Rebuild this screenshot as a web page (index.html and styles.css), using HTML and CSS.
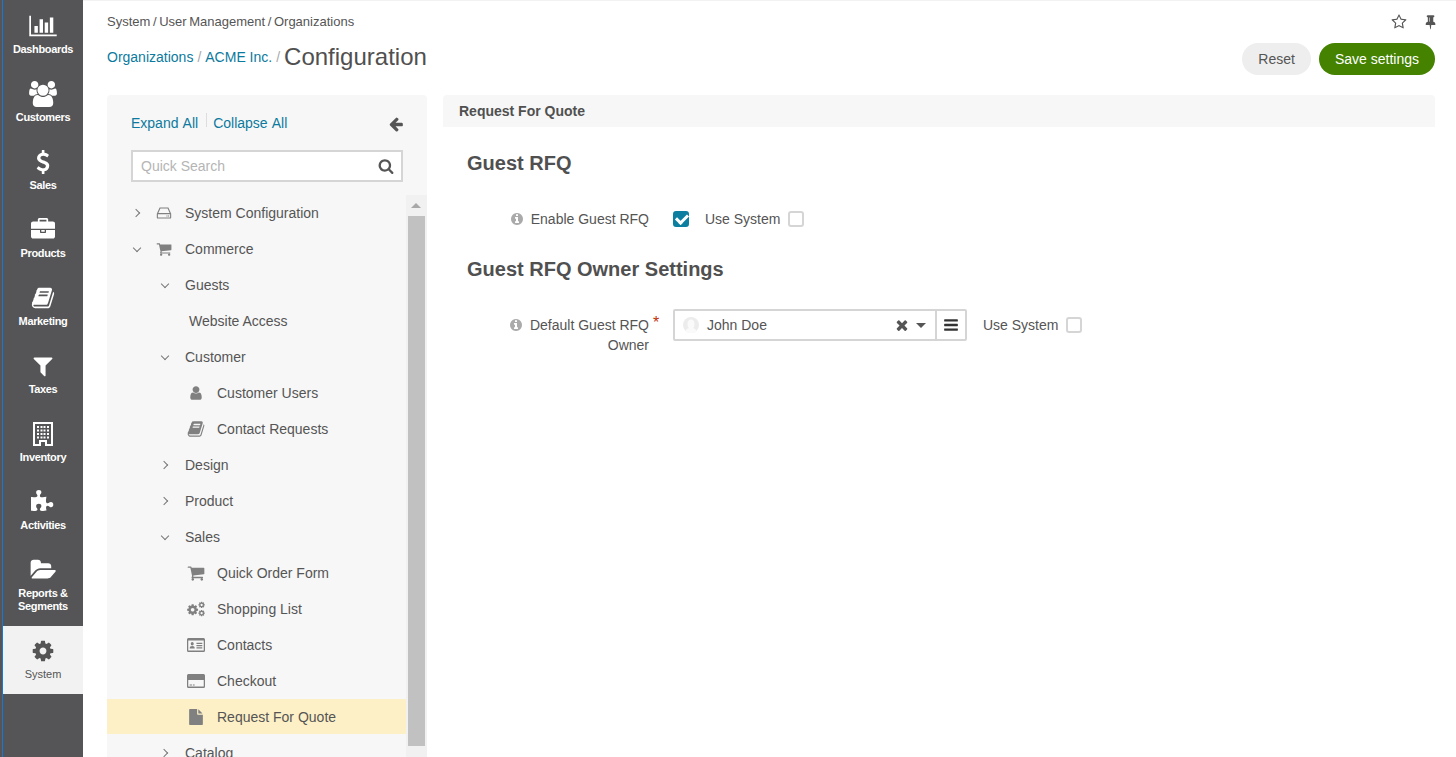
FILE: index.html
```html
<!DOCTYPE html>
<html lang="en">
<head>
    <meta charset="UTF-8">
    <meta name="viewport" content="width=device-width, initial-scale=1.0">
    <title>Configuration</title>
    <link rel="stylesheet" href="styles.css">
</head>
<body>
    <!-- icon sprite -->
    <svg class="sprite" xmlns="http://www.w3.org/2000/svg">
        <symbol id="i-chart" viewBox="0 0 2048 1792"><path d="M640 896v512h-256v-512h256zm384-512v1024h-256v-1024h256zm1024 1152v128h-2048v-1536h128v1408h1920zm-640-896v768h-256v-768h256zm384-384v1152h-256v-1152h256z"/></symbol>
        <symbol id="i-users" viewBox="0 0 1920 1792"><path d="M593 896q-162 5-265 128h-134q-82 0-138-40.5t-56-118.5q0-353 124-353 6 0 43.5 21t97.5 42.5 119 21.5q67 0 133-23-5 37-5 66 0 139 81 256zm1071 637q0 120-73 189.5t-194 69.5h-874q-121 0-194-69.5t-73-189.5q0-53 3.5-103.5t14-109 26.5-108.5 43-97.5 62-81 85.5-53.5 111.5-20q10 0 43 21.5t73 48 107 48 135 21.5 135-21.5 107-48 73-48 43-21.5q61 0 111.5 20t85.5 53.5 62 81 43 97.5 26.5 108.5 14 109 3.5 103.5zm-1024-1277q0 106-75 181t-181 75-181-75-75-181 75-181 181-75 181 75 75 181zm704 384q0 159-112.5 271.5t-271.5 112.5-271.5-112.5-112.5-271.5 112.5-271.5 271.5-112.5 271.5 112.5 112.5 271.5zm576 225q0 78-56 118.5t-138 40.5h-134q-103-123-265-128 81-117 81-256 0-29-5-66 66 23 133 23 59 0 119-21.5t97.5-42.5 43.5-21q124 0 124 353zm-128-609q0 106-75 181t-181 75-181-75-75-181 75-181 181-75 181 75 75 181z"/></symbol>
        <symbol id="i-usd" viewBox="0 0 1792 1792"><path d="M1362 1185q0 153-99.5 263.5t-258.5 136.5v175q0 14-9 23t-23 9h-135q-13 0-22.5-9.5t-9.5-22.5v-175q-66-9-127.5-31t-101.5-44.5-74-48-46.5-37.5-17.5-18q-17-21-2-41l103-135q7-10 23-12 15-2 24 9l2 2q113 99 243 125 37 8 74 8 81 0 142.5-43t61.5-122q0-28-15-53t-33.5-42-58.5-37.5-66-32-80-32.5q-39-16-61.5-25t-61.5-26.5-62.5-31-56.5-35.5-53.5-42.5-43.5-49-35.5-58-21-66.5-8.5-78q0-138 98-242t255-134v-180q0-13 9.5-22.5t22.5-9.5h135q14 0 23 9t9 23v176q57 6 110.5 23t87 33.5 63.5 37.5 39 29 15 14q17 18 5 38l-81 146q-8 15-23 16-14 3-27-7-3-3-14.5-12t-39-26.5-58.5-32-74.5-26-85.5-11.5q-95 0-155 43t-60 111q0 26 8.5 48t29.5 41.5 39.5 33 56 31 60.5 27 70 27.5q53 20 81 31.5t76 35 75.5 42.5 62 50 53 63.5 31.5 76.5 13 94z"/></symbol>
        <symbol id="i-briefcase" viewBox="0 0 1792 1792"><path d="M640 256h512v-128h-512v128zm1152 640v480q0 66-47 113t-113 47h-1472q-66 0-113-47t-47-113v-480h672v160q0 26 19 45t45 19h320q26 0 45-19t19-45v-160h672zm-768 0v128h-256v-128h256zm768-480v384h-1792v-384q0-66 47-113t113-47h352v-160q0-40 28-68t68-28h576q40 0 68 28t28 68v160h352q66 0 113 47t47 113z"/></symbol>
        <symbol id="i-book" viewBox="0 0 1792 1792"><path d="M1703 478q40 57 18 129l-275 906q-19 64-76.5 107.5t-122.5 43.5h-923q-77 0-148.5-53.5t-99.5-131.5q-24-67-2-127 0-4 3-27t4-37q1-8-3-21.5t-3-19.5q2-11 8-21t16.5-23.5 16.5-23.5q23-38 45-91.5t30-91.5q3-10 .5-30t-.5-28q3-11 17-28t17-23q21-36 42-92t25-90q1-9-2.5-32t.5-28q4-13 22-30.5t22-22.5q19-26 42.5-84.5t27.5-96.5q1-8-3-25.5t-2-26.5q2-8 9-18t18-23 17-21q8-12 16.5-30.5t15-35 16-36 19.5-32 26.5-23.5 36-11.5 47.5 5.5l-1 3q38-9 51-9h761q74 0 114 56t18 130l-274 906q-36 119-71.5 153.5t-128.5 34.5h-869q-27 0-38 15-11 16-1 43 24 70 144 70h923q29 0 56-15.5t35-41.5l300-987q7-22 5-57 38 15 59 43zm-1064 2q-4 13 2 22.5t20 9.5h608q13 0 25.5-9.5t16.5-22.5l21-64q4-13-2-22.5t-20-9.5h-608q-13 0-25.5 9.5t-16.5 22.5zm-83 256q-4 13 2 22.5t20 9.5h608q13 0 25.5-9.5t16.5-22.5l21-64q4-13-2-22.5t-20-9.5h-608q-13 0-25.5 9.5t-16.5 22.5z"/></symbol>
        <symbol id="i-filter" viewBox="0 0 1792 1792"><path d="M1595 295q17 41-14 70l-493 493v742q0 42-39 59-13 5-25 5-27 0-45-19l-256-256q-19-19-19-45v-486l-493-493q-31-29-14-70 17-39 59-39h1280q42 0 59 39z"/></symbol>
        <symbol id="i-building" viewBox="0 0 20 24"><path fill-rule="evenodd" d="M0 0h20v24H12v-4H8v4H0zM2 2v20h4v-4h8v4h4V2z"/><path d="M4 4h2v2H4zM7.5 4h2v2h-2zM10.5 4h2v2h-2zM14 4h2v2h-2zM4 7.5h2v2H4zM7.5 7.5h2v2h-2zM10.5 7.5h2v2h-2zM14 7.5h2v2h-2zM4 11h2v2H4zM7.5 11h2v2h-2zM10.5 11h2v2h-2zM14 11h2v2h-2zM4 14.5h2v2H4zM14 14.5h2v2h-2zM7.5 14.5h2v2h-2zM10.5 14.5h2v2h-2z"/></symbol>
        <symbol id="i-puzzle" viewBox="0 0 1792 1792"><path d="M1664 1098q0 81-44.5 135t-123.5 54q-41 0-77.5-17.5t-59-38-56.5-38-71-17.5q-110 0-110 124 0 39 16 115t15 115v5q-22 0-33 1-34 3-97.5 11.5t-115.5 13.5-98 5q-61 0-103-26.5t-42-83.5q0-37 17.5-71t38-56.5 38-59 17.5-77.5q0-79-54-123.5t-135-44.5q-84 0-143 45.5t-59 127.5q0 43 15 83t33.5 64.5 33.5 53 15 50.5q0 45-46 89-37 35-117 35-95 0-245-24-9-2-27.5-4t-27.5-4l-13-2q-1 0-3-1-2 0-2-1v-1024q2 1 17.5 3.5t34 5 21.5 3.5q150 24 245 24 80 0 117-35 46-44 46-89 0-22-15-50.5t-33.5-53-33.5-64.5-15-83q0-82 59-127.5t144-45.5q80 0 134 44.5t54 123.5q0 41-17.5 77.5t-38 59-38 56.5-17.5 71q0 57 42 83.5t103 26.5q64 0 180-15t163-17v2q-1 2-3.5 17.5t-5 34-3.5 21.5q-24 150-24 245 0 80 35 117 44 46 89 46 22 0 50.5-15t53-33.5 64.5-33.5 83-15q82 0 127.5 59t45.5 143z"/></symbol>
        <symbol id="i-folder" viewBox="0 0 1920 1792"><path d="M1879 952q0 31-31 66l-336 396q-43 51-120.5 86.5t-143.5 35.5h-1088q-34 0-60.5-13t-26.5-43q0-31 31-66l336-396q43-51 120.5-86.5t143.5-35.5h1088q34 0 60.5 13t26.5 43zm-343-344v160h-832q-94 0-197 47.5t-164 119.5l-337 396-5 6q0-4-.5-12.5t-.5-12.5v-960q0-92 66-158t158-66h320q92 0 158 66t66 158v32h544q92 0 158 66t66 158z"/></symbol>
        <symbol id="i-cog" viewBox="0 0 1792 1792"><path d="M1152 896q0-106-75-181t-181-75-181 75-75 181 75 181 181 75 181-75 75-181zm512-109v222q0 12-8 23t-20 13l-185 28q-19 54-39 91 35 50 107 138 10 12 10 25t-9 23q-27 37-99 108t-94 71q-12 0-26-9l-138-108q-44 23-91 38-16 136-29 186-7 28-36 28h-222q-14 0-24.5-8.5t-11.5-21.5l-28-184q-49-16-90-37l-141 107q-10 9-25 9-14 0-25-11-126-114-165-168-7-10-7-23 0-12 8-23 15-21 51-66.5t54-70.5q-27-50-41-99l-183-27q-13-2-21-12.5t-8-23.5v-222q0-12 8-23t19-13l186-28q14-46 39-92-40-57-107-138-10-12-10-24 0-10 9-23 26-36 98.5-107.5t94.5-71.5q13 0 26 10l138 107q44-23 91-38 16-136 29-186 7-28 36-28h222q14 0 24.5 8.5t11.5 21.5l28 184q49 16 90 37l142-107q9-9 24-9 13 0 25 10 129 119 165 170 7 8 7 22 0 12-8 23-15 21-51 66.5t-54 70.5q26 50 41 98l183 28q13 2 21 12.5t8 23.5z"/></symbol>
        <symbol id="i-cogs" viewBox="0 0 24 20"><use href="#i-cog" x="-1" y="2.5" width="17" height="17"/><use href="#i-cog" x="14.5" y="-.5" width="10" height="10"/><use href="#i-cog" x="14.5" y="10.5" width="10" height="10"/></symbol>
        <symbol id="i-cart" viewBox="0 0 1792 1792"><path d="M704 1536q0 52-38 90t-90 38-90-38-38-90 38-90 90-38 90 38 38 90zm896 0q0 52-38 90t-90 38-90-38-38-90 38-90 90-38 90 38 38 90zm128-1088v512q0 24-16.5 42.5t-40.5 21.5l-1044 122q13 60 13 70 0 16-24 64h920q26 0 45 19t19 45-19 45-45 19h-1024q-26 0-45-19t-19-45q0-11 8-31.5t16-36 21.5-40 15.5-29.5l-177-823h-204q-26 0-45-19t-19-45 19-45 45-19h256q16 0 28.5 6t19.5 14.5 13 23 8 26 5.5 29.5 4.5 26h1201q26 0 45 19t19 45z"/></symbol>
        <symbol id="i-user" viewBox="0 0 1792 1792"><path d="M1536 1399q0 109-62.5 187t-150.5 78h-854q-88 0-150.5-78t-62.5-187q0-85 8.5-160.5t31.5-152 58.5-131 94-89 134.5-34.5q131 128 313 128t313-128q76 0 134.5 34.5t94 89 58.5 131 31.5 152 8.5 160.5zm-256-887q0 159-112.5 271.5t-271.5 112.5-271.5-112.5-112.5-271.5 112.5-271.5 271.5-112.5 271.5 112.5 112.5 271.5z"/></symbol>
        <symbol id="i-file" viewBox="0 0 1792 1792"><path d="M1152 512v-472q22 14 36 28l408 408q14 14 28 36h-472zm-128 32q0 40 28 68t68 28h544v1056q0 40-28 68t-68 28h-1344q-40 0-68-28t-28-68v-1600q0-40 28-68t68-28h800v544z"/></symbol>
        <symbol id="i-hdd" viewBox="0 0 20 16"><path fill-rule="evenodd" d="M4.5 1h11l3.5 8v4.500a1.500 1.500 0 0 1-1.500 1.500h-15A1.500 1.500 0 0 1 1 13.500V9zM5.500 2.400 3 8h14l-2.500-5.600zM2.400 9.500v4h15.200v-4zM13 11h1.400v1.400H13zM15 11h1.400v1.400H15z"/></symbol>
        <symbol id="i-contact" viewBox="0 1 20 14" preserveAspectRatio="none"><path fill-rule="evenodd" d="M1.5 1h17A1.500 1.500 0 0 1 20 2.500v11a1.500 1.500 0 0 1-1.500 1.500h-17A1.500 1.500 0 0 1 0 13.500v-11A1.500 1.500 0 0 1 1.500 1zM1.400 3.500v10h17.200v-10z"/><path d="M3 11.500c0-1.800 1-2.500 2.800-2.500s2.800.7 2.800 2.500zM5.800 5a1.700 1.700 0 1 1 0 3.400 1.700 1.700 0 0 1 0-3.400zM10.500 5.800h6.500v1.200h-6.500zM10.500 8h6.500v1.200h-6.500zM10.500 10.200h6.500v1.200h-6.500z"/></symbol>
        <symbol id="i-card" viewBox="0 1 20 14" preserveAspectRatio="none"><path fill-rule="evenodd" d="M1.500 1h17A1.500 1.500 0 0 1 20 2.500v11a1.500 1.500 0 0 1-1.500 1.500h-17A1.500 1.500 0 0 1 0 13.500v-11A1.500 1.500 0 0 1 1.500 1zM1.400 7v6.600h17.200V7z"/><path d="M3 11.500h2.500v1H3zM6.500 11.500h2v1h-2z"/></symbol>
        <symbol id="i-search" viewBox="0 0 1792 1792"><path d="M1216 832q0-185-131.5-316.5t-316.5-131.5-316.5 131.5-131.5 316.5 131.5 316.5 316.5 131.5 316.5-131.5 131.5-316.5zm512 832q0 52-38 90t-90 38q-54 0-90-38l-343-342q-179 124-399 124-143 0-273.5-55.5t-225-150-150-225-55.5-273.5 55.5-273.5 150-225 225-150 273.5-55.5 273.5 55.5 225 150 150 225 55.5 273.5q0 220-124 399l343 343q37 37 37 90z"/></symbol>
        <symbol id="i-arrow" viewBox="0 0 1792 1792"><path d="M1664 896v128q0 53-32.5 90.5t-84.5 37.5h-704l293 294q38 36 38 90t-38 90l-75 76q-37 37-90 37-52 0-91-37l-651-652q-37-37-37-90 0-52 37-91l651-650q38-38 91-38 52 0 90 38l75 74q38 38 38 91t-38 91l-293 293h704q52 0 84.5 37.5t32.5 90.5z"/></symbol>
        <symbol id="i-info" viewBox="0 0 1792 1792"><path d="M1152 1376v-160q0-14-9-23t-23-9h-96v-512q0-14-9-23t-23-9h-320q-14 0-23 9t-9 23v160q0 14 9 23t23 9h96v320h-96q-14 0-23 9t-9 23v160q0 14 9 23t23 9h448q14 0 23-9t9-23zm-128-896v-160q0-14-9-23t-23-9h-192q-14 0-23 9t-9 23v160q0 14 9 23t23 9h192q14 0 23-9t9-23zm640 416q0 209-103 385.5t-279.5 279.5-385.5 103-385.5-103-279.5-279.5-103-385.5 103-385.5 279.5-279.5 385.5-103 385.5 103 279.5 279.5 103 385.5z"/></symbol>
        <symbol id="i-star" viewBox="0 0 1792 1792"><path d="M1201 1004l306-297-422-62-189-382-189 382-422 62 306 297-73 421 378-199 377 199zm527-357q0 22-26 48l-363 354 86 500q1 7 1 20 0 50-41 50-19 0-40-12l-449-236-449 236q-22 12-40 12-21 0-31.5-14.5t-10.5-35.5q0-6 2-20l86-500-364-354q-25-27-25-48 0-37 56-46l502-73 225-455q19-41 49-41t49 41l225 455 502 73q56 9 56 46z"/></symbol>
        <symbol id="i-pin" viewBox="0 0 1408 1792"><path d="M672 840v-448q0-14-9-23t-23-9-23 9-9 23v448q0 14 9 23t23 9 23-9 9-23zm672 344q0 26-19 45t-45 19h-429l-51 483q-2 12-10.5 20.5t-20.5 8.5h-1q-27 0-32-27l-76-485h-404q-26 0-45-19t-19-45q0-123 78.5-221.5t177.5-98.5v-512q-52 0-90-38t-38-90 38-90 90-38h640q52 0 90 38t38 90-38 90-90 38v512q99 0 177.5 98.5t78.5 221.5z"/></symbol>
        <symbol id="i-times" viewBox="0 0 1792 1792"><path d="M1490 1322q0 40-28 68l-136 136q-28 28-68 28t-68-28l-294-294-294 294q-28 28-68 28t-68-28l-136-136q-28-28-28-68t28-68l294-294-294-294q-28-28-28-68t28-68l136-136q28-28 68-28t68 28l294 294 294-294q28-28 68-28t68 28l136 136q28 28 28 68t-28 68l-294 294 294 294q28 28 28 68z"/></symbol>
        <symbol id="i-bars" viewBox="0 0 1792 1792"><path d="M1664 1344v128q0 26-19 45t-45 19h-1408q-26 0-45-19t-19-45v-128q0-26 19-45t45-19h1408q26 0 45 19t19 45zm0-512v128q0 26-19 45t-45 19h-1408q-26 0-45-19t-19-45v-128q0-26 19-45t45-19h1408q26 0 45 19t19 45zm0-512v128q0 26-19 45t-45 19h-1408q-26 0-45-19t-19-45v-128q0-26 19-45t45-19h1408q26 0 45 19t19 45z"/></symbol>
        <symbol id="i-avatar" viewBox="0 0 16 16"><circle cx="8" cy="8" r="8" fill="#ececec"/><ellipse cx="8" cy="7" rx="3.500" ry="4.500" fill="#fafafa"/><path d="M2.500 14c1-2.500 3-3 5.500-3s4.500.5 5.500 3a8 8 0 0 1-11 0z" fill="#fafafa"/></symbol>
    </svg>

    <div class="app">
        <nav class="side-nav">
            <a class="nav-item"><svg class="nav-icon nav-icon-chart"><use href="#i-chart"/></svg><span>Dashboards</span></a>
            <a class="nav-item"><svg class="nav-icon nav-icon-users"><use href="#i-users"/></svg><span>Customers</span></a>
            <a class="nav-item"><svg class="nav-icon"><use href="#i-usd"/></svg><span>Sales</span></a>
            <a class="nav-item"><svg class="nav-icon"><use href="#i-briefcase"/></svg><span>Products</span></a>
            <a class="nav-item"><svg class="nav-icon"><use href="#i-book"/></svg><span>Marketing</span></a>
            <a class="nav-item"><svg class="nav-icon"><use href="#i-filter"/></svg><span>Taxes</span></a>
            <a class="nav-item"><svg class="nav-icon"><use href="#i-building"/></svg><span>Inventory</span></a>
            <a class="nav-item"><svg class="nav-icon"><use href="#i-puzzle"/></svg><span>Activities</span></a>
            <a class="nav-item nav-item-tall"><svg class="nav-icon nav-icon-folder"><use href="#i-folder"/></svg><span>Reports &amp;<br>Segments</span></a>
            <a class="nav-item nav-item-active"><svg class="nav-icon"><use href="#i-cog"/></svg><span>System</span></a>
        </nav>

        <main class="main">
            <header class="page-head">
                <div class="crumb-row">
                    <div class="crumbs">System / User Management / Organizations</div>
                    <div class="head-icons">
                        <svg class="icon-star"><use href="#i-star"/></svg>
                        <svg class="icon-pin"><use href="#i-pin"/></svg>
                    </div>
                </div>
                <div class="title-row">
                    <div class="title">
                        <a class="title-link">Organizations</a><span class="title-sep">/</span><a class="title-link">ACME Inc.</a><span class="title-sep">/</span><h1>Configuration</h1>
                    </div>
                    <div class="actions">
                        <button class="btn btn-reset">Reset</button>
                        <button class="btn btn-save">Save settings</button>
                    </div>
                </div>
            </header>

            <div class="columns">
                <aside class="tree-panel">
                    <div class="tree-tools">
                        <a class="tool-link">Expand All</a>
                        <span class="tool-sep"></span>
                        <a class="tool-link">Collapse All</a>
                        <svg class="tool-arrow"><use href="#i-arrow"/></svg>
                    </div>
                    <div class="search">
                        <input class="search-input" type="text" placeholder="Quick Search">
                        <svg class="search-icon"><use href="#i-search"/></svg>
                    </div>
                    <div class="tree-scroll">
                        <ul class="tree">
                            <li class="row"><span class="chev chev-right"></span><svg class="row-icon row-icon-top"><use href="#i-hdd"/></svg>System Configuration</li>
                            <li class="row"><span class="chev chev-down"></span><svg class="row-icon row-icon-top"><use href="#i-cart"/></svg>Commerce</li>
                            <li class="row row-2"><span class="chev chev-down"></span>Guests</li>
                            <li class="row row-3 row-plain">Website Access</li>
                            <li class="row row-2"><span class="chev chev-down"></span>Customer</li>
                            <li class="row row-3"><svg class="row-icon"><use href="#i-user"/></svg>Customer Users</li>
                            <li class="row row-3"><svg class="row-icon row-icon-lg"><use href="#i-book"/></svg>Contact Requests</li>
                            <li class="row row-2"><span class="chev chev-right"></span>Design</li>
                            <li class="row row-2"><span class="chev chev-right"></span>Product</li>
                            <li class="row row-2"><span class="chev chev-down"></span>Sales</li>
                            <li class="row row-3"><svg class="row-icon row-icon-lg"><use href="#i-cart"/></svg>Quick Order Form</li>
                            <li class="row row-3"><svg class="row-icon row-icon-lg"><use href="#i-cogs"/></svg>Shopping List</li>
                            <li class="row row-3"><svg class="row-icon row-icon-wide"><use href="#i-contact"/></svg>Contacts</li>
                            <li class="row row-3"><svg class="row-icon row-icon-wide"><use href="#i-card"/></svg>Checkout</li>
                            <li class="row row-3 row-active"><svg class="row-icon"><use href="#i-file"/></svg>Request For Quote</li>
                            <li class="row row-2"><span class="chev chev-right"></span>Catalog</li>
                        </ul>
                        <div class="scrollbar">
                            <span class="scroll-up"></span>
                            <span class="scroll-thumb"></span>
                        </div>
                    </div>
                </aside>

                <section class="content">
                    <div class="section-bar">Request For Quote</div>
                    <h2 class="group-title">Guest RFQ</h2>
                    <div class="field field-first">
                        <label class="field-label"><svg class="info"><use href="#i-info"/></svg>Enable Guest RFQ</label>
                        <span class="check check-on"></span>
                        <span class="use-system">Use System</span>
                        <span class="check"></span>
                    </div>
                    <h2 class="group-title group-title-second">Guest RFQ Owner Settings</h2>
                    <div class="field field-owner">
                        <label class="field-label"><svg class="info"><use href="#i-info"/></svg><span class="label-text">Default Guest RFQ<span class="req">*</span></span><br>Owner</label>
                        <div class="owner-select">
                            <div class="select-value">
                                <svg class="avatar"><use href="#i-avatar"/></svg>
                                <span class="select-text">John Doe</span>
                                <svg class="select-clear"><use href="#i-times"/></svg>
                                <span class="select-caret"></span>
                            </div>
                            <div class="select-menu"><svg><use href="#i-bars"/></svg></div>
                        </div>
                        <span class="use-system">Use System</span>
                        <span class="check"></span>
                    </div>
                </section>
            </div>
        </main>
    </div>
</body>
</html>
```

FILE: styles.css
```css
* { box-sizing: border-box; }
html, body { height: 100%; }
body {
    margin: 0;
    overflow: hidden;
    background: #fff;
    color: #505050;
    font-family: "Liberation Sans", Arial, sans-serif;
    font-size: 14px;
}
.sprite { display: none; }
a { color: #0c7a9e; text-decoration: none; }

.app { display: flex; height: 100vh; }

/* Left navigation */
.side-nav {
    flex: none;
    width: 83px;
    height: 100%;
    padding: 1px 0 0 3px;
    background: linear-gradient(to right, #555557 2px, #1976d2 2px, #1976d2 3px, #555557 3px);
}
.nav-item {
    display: flex;
    flex-direction: column;
    align-items: center;
    justify-content: center;
    height: 68px;
    color: #fff;
    font-size: 11px;
    font-weight: bold;
    letter-spacing: -.35px;
    line-height: 13px;
    text-align: center;
}
.nav-item-tall { height: 81px; }
.nav-item-active { background: #f2f2f2; color: #555; font-weight: normal; letter-spacing: 0; }
.nav-icon { width: 24px; height: 24px; margin-bottom: 5px; fill: currentColor; }
.nav-icon-chart { width: 28px; }
.nav-icon-users { width: 28px; height: 26px; margin: -1px 0 4px; }
.nav-icon-folder { width: 27px; }

/* Main area */
.main {
    flex: 1;
    min-width: 0;
    padding: 0 21px 0 24px;
    display: flex;
    flex-direction: column;
    box-shadow: inset 0 1px #f2f2f2;
}
.page-head { flex: none; height: 95px; }
.crumb-row { display: flex; justify-content: space-between; align-items: center; padding-top: 13px; height: 30px; }
.crumbs { font-size: 13px; word-spacing: -1px; color: #555; }
.head-icons { display: flex; align-items: center; gap: 17px; margin-right: -1px; }
.icon-star { width: 16px; height: 16px; fill: #555; }
.icon-pin { width: 12px; height: 16px; fill: #555; }
.title-row { display: flex; justify-content: space-between; align-items: center; margin-top: 13px; }
.title { display: flex; align-items: center; padding-bottom: 4px; }
.title-link { font-size: 14px; }
.title-sep { margin: 0 4px; font-size: 14px; color: #aaa; }
h1 { margin: 0; font-size: 24px; font-weight: normal; color: #505050; }
.actions { display: flex; gap: 8px; }
.btn {
    height: 32px;
    padding: 0 16px;
    border: 0;
    border-radius: 16px;
    font-family: inherit;
    font-size: 14px;
}
.btn-reset { background: #eee; color: #555; }
.btn-save { background: #448200; color: #fff; }

.columns { flex: 1; min-height: 0; display: flex; gap: 16px; }

/* Tree panel */
.tree-panel {
    flex: none;
    width: 320px;
    display: flex;
    flex-direction: column;
    background: #f7f7f7;
    border-radius: 4px 4px 0 0;
}
.tree-tools { display: flex; align-items: center; height: 55px; padding: 0 23px 0 24px; }
.tool-link { font-size: 14px; line-height: 18px; word-spacing: 1px; }
.tool-sep { width: 1px; height: 14px; margin: -6px 6px 0 8px; background: #ddd; }
.tool-arrow { width: 16px; height: 16px; margin: 2px 0 0 auto; fill: #555; }
.search { position: relative; height: 32px; margin: 0 24px; }
.search-input {
    width: 100%;
    height: 100%;
    padding: 0 30px 0 8px;
    border: 2px solid #d5d5d5;
    background: #fff;
    font-family: inherit;
    font-size: 14px;
    outline: none;
}
.search-input::placeholder { color: #b5b5b5; }
.search-icon { position: absolute; right: 9px; top: 8px; width: 16px; height: 16px; fill: #555; }

.tree-scroll { flex: 1; min-height: 0; display: flex; margin-top: 13px; }
.tree { flex: 1; min-width: 0; margin: 0; padding: 0; list-style: none; }
.row { display: flex; align-items: center; height: 36px; padding-left: 24px; color: #555; }
.row-2 { padding-left: 52px; }
.row-3 { padding-left: 80px; }
.row-plain { padding-left: 82px; }
.row-active { background: #fdf0c7; height: 35px; margin-bottom: 1px; }
.chev { flex: none; width: 6px; height: 6px; border: solid #777; border-width: 1.5px 1.5px 0 0; }
.chev-right { margin: 0 18px 0 2px; transform: rotate(45deg); }
.chev-down { margin: -3px 17px 0 3px; transform: rotate(135deg); }
.row-icon { flex: none; width: 18px; height: 16px; margin-right: 12px; fill: #808080; }
.row-icon-lg { height: 18px; }
.row-icon-wide { height: 14px; }
.row-icon-top { width: 16px; margin: 0 13px 0 -1px; }

.scrollbar { flex: none; position: relative; width: 21px; background: #f1f1f1; }
.scroll-up {
    position: absolute;
    top: 8px;
    left: 5px;
    border: 5px solid transparent;
    border-top: 0;
    border-bottom: 5px solid #a8a8a8;
}
.scroll-thumb { position: absolute; top: 21px; left: 2px; width: 17px; height: 530px; background: #c1c1c1; }

/* Right content */
.content { flex: 1; min-width: 0; }
.section-bar {
    height: 32px;
    padding-left: 16px;
    background: #f7f7f7;
    border-radius: 4px 4px 0 0;
    font-size: 14px;
    font-weight: bold;
    line-height: 32px;
}
.group-title { margin: 24px 0 0 24px; font-size: 20px; line-height: 24px; color: #505050; }
.group-title-second { margin-top: 29px; }
.field { display: flex; align-items: center; }
.field-first { height: 18px; margin-top: 35px; }
.field-owner { align-items: flex-start; margin-top: 28px; }
.field-label { width: 206px; text-align: right; color: #555; line-height: 20px; }
.field-owner .field-label { padding-top: 6px; }
.info { width: 14px; height: 14px; margin-right: 7px; fill: #aaa; vertical-align: -2px; }
.check { flex: none; width: 16px; height: 16px; border: 2px solid #d5d5d5; border-radius: 3px; background: #fff; }
.check-on { position: relative; margin-left: 24px; background: #0c7fa0; border-color: #0c7fa0; }
.check-on::after {
    content: "";
    position: absolute;
    left: 1px;
    top: 1px;
    width: 9px;
    height: 5px;
    border: solid #fff;
    border-width: 0 0 3px 3px;
    transform: rotate(-45deg);
}
.use-system { margin: 0 8px 0 16px; color: #555; }

.owner-select {
    flex: none;
    display: flex;
    width: 294px;
    height: 32px;
    margin-left: 24px;
    border: 2px solid #d5d5d5;
    border-radius: 2px;
}
.select-value { flex: 1; display: flex; align-items: center; padding: 0 9px 0 8px; }
.avatar { flex: none; width: 16px; height: 16px; }
.select-text { flex: 1; margin-left: 8px; color: #555; }
.select-clear { flex: none; width: 16px; height: 16px; fill: #555; }
.select-caret { margin-left: 6px; border: 5px solid transparent; border-bottom: 0; border-top: 5px solid #555; }
.select-menu { display: flex; align-items: center; justify-content: center; width: 30px; border-left: 2px solid #d5d5d5; }
.select-menu svg { width: 16px; height: 16px; fill: #333; }
.field-owner .use-system { line-height: 32px; }
.field-owner > .check { margin-top: 8px; }
.label-text { position: relative; }
.req { position: absolute; left: 100%; top: -4px; margin-left: 4px; color: #c0320a; font-size: 16px; line-height: 20px; }
```
